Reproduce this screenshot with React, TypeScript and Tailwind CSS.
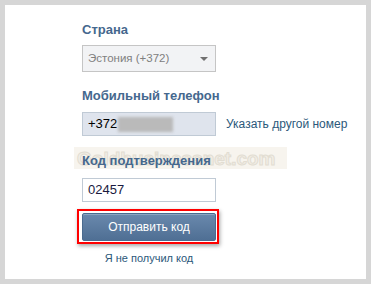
export default function App() {
  return (
    <div className="w-[371px] h-[284px] bg-[#d6d6d6] p-[5px] font-['Liberation_Sans',Tahoma,sans-serif]">
      <div className="relative h-full bg-white pl-[77px] pt-[17px]">
        {/* Watermark */}
        <div className="absolute left-[69px] top-[142px] w-[213px] h-[22px] bg-[#f7f4ee] flex items-center pl-[3px] overflow-hidden">
          <span className="text-[19px] font-bold leading-none text-[#f2eee6] [-webkit-text-stroke:1px_#e2ddd2]">
            Goldbusinessnet.com
          </span>
        </div>

        <div className="relative">
          <div className="text-[13px] leading-[16px] font-bold text-[#45688e]">Страна</div>
          <div className="mt-[7px] w-[134px] h-[27px] border border-[#c5c5c5] bg-[#f2f3f5] flex items-center justify-between pl-[5px] pr-[7px]">
            <span className="text-[11.5px] text-[#808080]">Эстония (+372)</span>
            <span className="w-0 h-0 border-l-[4px] border-r-[4px] border-t-[4px] border-l-transparent border-r-transparent border-t-[#707070]" />
          </div>

          <div className="mt-[16px] text-[13px] leading-[16px] font-bold text-[#45688e]">Мобильный телефон</div>
          <div className="mt-[8px] flex items-center gap-[10px]">
            <div className="w-[134px] h-[24px] border border-[#c0cad5] bg-[#dfe4ed] flex items-center pl-[5px]">
              <span className="text-[13px] text-black">+372</span>
              <span className="ml-[1px] w-[55px] h-[15px] bg-[#bababa] blur-[1.5px]" />
            </div>
            <span className="text-[12px] text-[#2b587a]">Указать другой номер</span>
          </div>

          <div className="mt-[17px] text-[13px] leading-[16px] font-bold text-[#45688e]">Код подтверждения</div>
          <div className="mt-[9px] w-[134px] h-[24px] border border-[#c0cad5] bg-white flex items-center pl-[5px]">
            <span className="text-[13px] text-[#1a1a40]">02457</span>
          </div>

          <div className="relative mt-[11px] w-[134px] h-[28px]">
            <div className="absolute -left-[5px] -top-[4px] w-[142px] h-[35px] border-[2px] border-[#ff0000] shadow-[1px_2px_4px_rgba(0,0,0,0.35)]" />
            <button className="relative w-full h-full rounded-[2px] border border-[#4a6b8f] bg-gradient-to-b from-[#6a89ad] to-[#4f6f94] text-white text-[12px] shadow-[inset_0_1px_0_rgba(255,255,255,0.25)]">
              Отправить код
            </button>
          </div>

          <div className="mt-[9px] w-[134px] text-center text-[11px] leading-[16px] text-[#2b587a]">Я не получил код</div>
        </div>
      </div>
    </div>
  );
}
